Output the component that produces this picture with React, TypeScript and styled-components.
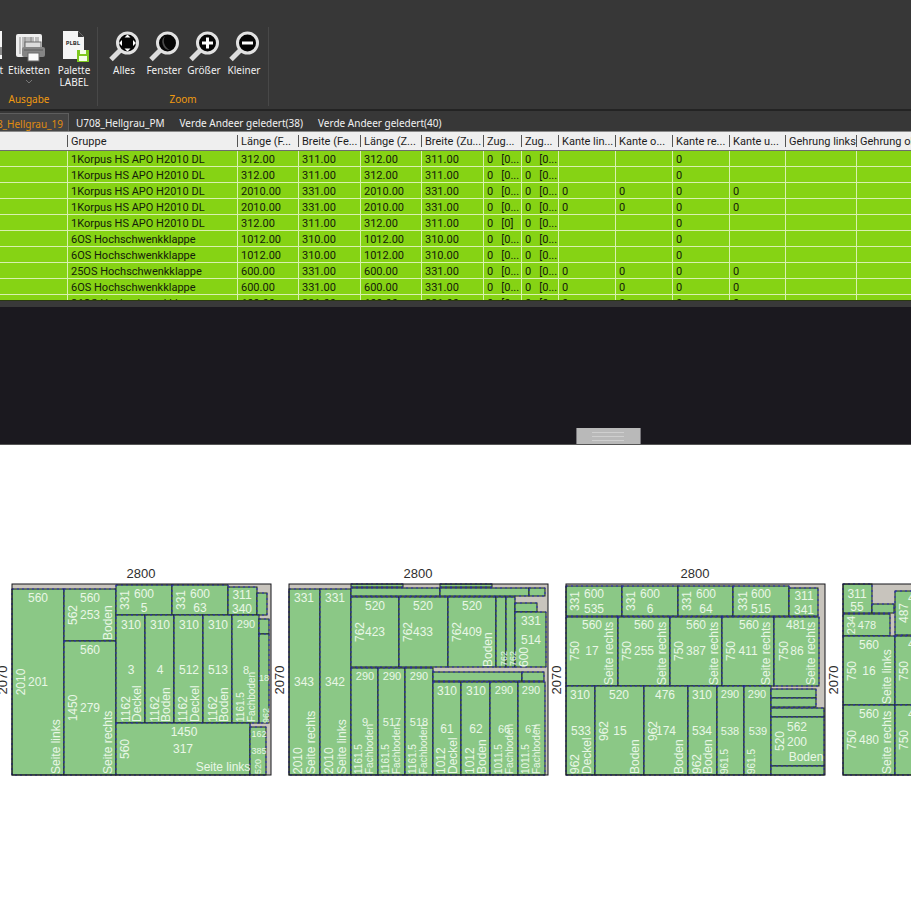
import React from 'react';
import styled, { createGlobalStyle } from 'styled-components';

const GlobalStyle = createGlobalStyle`
  * { box-sizing: border-box; }
  body { margin: 0; background: #ffffff; overflow-x: hidden; }
  button { font: inherit; color: inherit; border: 0; background: none; padding: 0; cursor: pointer; }
`;

const Page = styled.div`
  display: flex;
  flex-direction: column;
  min-height: 100vh;
  overflow: hidden;
  font-family: 'Noto Sans', 'Open Sans', sans-serif;
  font-size: 10px;
  color: #f0f0f0;
`;

/* ---------- ribbon ---------- */

const Ribbon = styled.header`
  display: flex;
  padding: 27px 0 3px;
  background: #373737;
  border-bottom: 2px solid #232323;
`;

const RibbonGroup = styled.section<{ $cut?: boolean }>`
  display: flex;
  flex-direction: column;
  flex: none;
  width: ${(p) => (p.$cut ? 137 : 171)}px;
  margin-left: ${(p) => (p.$cut ? -39 : 0)}px;
  border-right: 1px solid #484848;
`;

const Tools = styled.div<{ $end?: boolean }>`
  display: flex;
  justify-content: ${(p) => (p.$end ? 'flex-end' : 'center')};
  height: 65px;
  padding: ${(p) => (p.$end ? '0 2px 0 0' : '0 0 0 2px')};
`;

const ToolButton = styled.button<{ $width: number; $cut?: boolean }>`
  display: flex;
  flex-direction: column;
  align-items: ${(p) => (p.$cut ? 'flex-end' : 'center')};
  width: ${(p) => p.$width}px;
  padding-right: ${(p) => (p.$cut ? 2 : 0)}px;
  line-height: 12px;
  white-space: nowrap;
  svg { flex: none; margin: 3px 0 2px; }
`;

const ToolText = styled.span`
  display: block;
  text-align: center;
  white-space: pre-line;
`;

const Caption = styled.div`
  text-align: center;
  line-height: 14px;
  color: #f09a10;
`;

function Lens({ children }: { children: React.ReactNode }) {
  return (
    <svg width="32" height="32" viewBox="0 0 32 32" aria-hidden="true">
      <path d="M3 29.5 L12 20.5" stroke="#dedede" strokeWidth="5" />
      <circle cx="19.5" cy="13" r="10" fill="#050505" stroke="#e2e2e2" strokeWidth="3" />
      {children}
    </svg>
  );
}

const LabelPrinterIcon = () => (
  <svg width="32" height="32" viewBox="0 0 32 32" aria-hidden="true">
    <rect x="3" y="4" width="26" height="23" rx="2" fill="#eeeeee" />
    <path d="M7 7v17M10 7v17M14 7v17M16 7v17M20 7v17M23 7v17M25 7v17" stroke="#8a8a8a" strokeWidth="1" />
    <path d="M12 7v17M18 7v17" stroke="#555" strokeWidth="1" />
    <rect x="12" y="12" width="16" height="6" fill="#dcdcdc" stroke="#6a6a6a" />
    <rect x="9" y="17" width="23" height="10" rx="2" fill="#858585" />
    <path d="M11 20h19" stroke="#5c5c5c" />
    <rect x="15" y="23" width="11" height="8" fill="#fafafa" stroke="#6a6a6a" />
  </svg>
);

const PaletteIcon = () => (
  <svg width="32" height="32" viewBox="0 0 32 32" aria-hidden="true">
    <path d="M5 1H20L26 7V29H5Z" fill="#f5f5f5" />
    <path d="M20 1V7H26Z" fill="#3a3a3a" />
    <text x="15" y="15" textAnchor="middle" fontSize="6" fontWeight="700" fill="#333">PLBL</text>
    <rect x="19" y="20" width="12" height="12" fill="#7ec81e" />
    <rect x="22" y="20" width="6" height="4" fill="#f4ffe8" />
    <rect x="21" y="26" width="8" height="5" fill="#f4ffe8" />
  </svg>
);

const SheetEdgeIcon = () => (
  <svg width="32" height="32" viewBox="0 0 32 32" aria-hidden="true">
    <path d="M5 1H31V17H5Z" fill="#f5f5f5" />
    <path d="M5 17H31V25H5Z" fill="#8a8a8a" />
    <path d="M5 25H31V29H5Z" fill="#f5f5f5" />
  </svg>
);

const Chevron = () => (
  <svg width="8" height="6" viewBox="0 0 8 6" aria-hidden="true">
    <path d="M1 1L4 4L7 1" fill="none" stroke="#777" strokeWidth="1" />
  </svg>
);

/* ---------- tabs ---------- */

const TabBar = styled.nav`
  display: flex;
  height: 20px;
  padding-top: 2px;
  background: #373737;
`;

const Tab = styled.button<{ $active?: boolean }>`
  display: flex;
  justify-content: flex-end;
  flex: none;
  width: ${(p) => (p.$active ? '109px' : 'auto')};
  margin-left: ${(p) => (p.$active ? -40 : 0)}px;
  padding: ${(p) => (p.$active ? '0 5px 0 0' : '0 8px 0 7px')};
  line-height: 20px;
  color: ${(p) => (p.$active ? '#e08c10' : '#f2f2f2')};
  background: ${(p) => (p.$active ? '#444444' : 'transparent')};
  border: solid #5e5e5e;
  border-width: ${(p) => (p.$active ? '1px 1px 0 0' : 0)};
  white-space: nowrap;
`;

/* ---------- part list ---------- */

const TableArea = styled.div`
  height: 170px;
  overflow: hidden;
  background: #86d314;
  border-bottom: 1px solid #2a3a10;
`;

const PartTable = styled.table`
  width: 100%;
  min-width: 960px;
  table-layout: fixed;
  border-collapse: separate;
  border-spacing: 0;
  font-family: Roboto, 'Liberation Sans', sans-serif;
  font-size: 11px;
  color: #14200a;
`;

const HeadCell = styled.th`
  position: relative;
  height: 20px;
  padding: 1px 0 0 3px;
  overflow: hidden;
  text-align: left;
  font-weight: 400;
  white-space: nowrap;
  color: #1c1c1c;
  background: #efefef;
  border-top: 1px solid #8a8a8a;
  border-bottom: 1px solid #6d6d6d;
  &::after {
    content: '';
    position: absolute;
    right: 0;
    top: 3px;
    bottom: 3px;
    width: 1px;
    background: #555;
  }
`;

const Cell = styled.td`
  height: 16px;
  padding: 2px 0 0 3px;
  overflow: hidden;
  line-height: 13px;
  white-space: pre;
  border-right: 1px solid #d9f0b0;
  border-bottom: 1px solid #d9f0b0;
`;

const columns: [string, number | undefined][] = [
  ['', 68], ['Gruppe', 170], ['Länge (F...', 61], ['Breite (Fe...', 62], ['Länge (Z...', 61],
  ['Breite (Zu...', 62], ['Zug...', 38], ['Zug...', 37], ['Kante lin...', 57], ['Kante o...', 57],
  ['Kante re...', 57], ['Kante u...', 56], ['Gehrung links', 71], ['Gehrung oben', undefined],
];

const part = (name: string, l: string, w: string, edges: boolean, pull = '0   [0...') => {
  const e = edges ? '0' : '';
  return ['', name, l, w, l, w, pull, '0   [0...', e, e, '0', e, '', ''];
};

const H2010 = '1Korpus HS APO H2010 DL';
const rows = [
  part(H2010, '312.00', '311.00', false),
  part(H2010, '312.00', '311.00', false),
  part(H2010, '2010.00', '331.00', true),
  part(H2010, '2010.00', '331.00', true),
  part(H2010, '312.00', '311.00', false, '0   [0]'),
  part('6OS Hochschwenkklappe', '1012.00', '310.00', false),
  part('6OS Hochschwenkklappe', '1012.00', '310.00', false),
  part('25OS Hochschwenkklappe', '600.00', '331.00', true),
  part('6OS Hochschwenkklappe', '600.00', '331.00', true),
  part('26OS Hochschwenkklappe', '600.00', '331.00', true),
];

/* ---------- preview ---------- */

const Stage = styled.div`
  display: flex;
  align-items: flex-end;
  height: 144px;
  background: #1b191f;
  border-top: 6px solid #393939;
  border-bottom: 1px solid #555;
`;

const Grip = styled.button`
  display: flex;
  flex-direction: column;
  align-items: center;
  justify-content: center;
  gap: 3px;
  width: 65px;
  height: 16px;
  margin-left: calc(66.7% - 32px);
  background: #b9b9b9;
  border: solid #77757a;
  border-width: 0 1px;
  span { width: 32px; height: 1px; background: #cfcfcf; }
`;

const Plans = styled.main`
  display: flex;
  flex: 1;
  padding-top: 117px;
  margin-left: -6px;
  background: #ffffff;
`;

const Plan = styled.svg`
  flex: none;
  font-family: 'Liberation Sans', Arial, sans-serif;
`;

type Rect = [number, number, number, number];
/** kind: h = centred, v = centred and turned, b = turned, starting at the given bottom edge */
type Note = [kind: 'h' | 'v' | 'b', text: string, x: number, y: number, size?: number];
interface Sheet { pieces: Rect[]; notes: Note[] }

const sheets: Sheet[] = [
  {
    pieces: [
      [0, 5, 52, 186], [52, 5, 52, 52], [52, 57, 52, 134], [104, 1, 56, 30], [160, 1, 56, 30],
      [216, 3, 29, 28], [245, 9, 10, 22], [104, 31, 29, 108], [133, 31, 29, 108], [162, 31, 29, 108],
      [191, 31, 29, 108], [220, 31, 27, 108], [247, 35, 10, 15], [247, 50, 10, 89],
      [104, 139, 134, 52], [238, 143, 16, 48],
    ],
    notes: [
      ['h', '560', 26, 14], ['h', '201', 26, 98], ['v', '2010', 9, 98], ['b', 'Seite links', 44, 190],
      ['h', '560', 78, 14], ['h', '253', 78, 31], ['v', '562', 61, 31], ['b', 'Boden', 96, 56],
      ['h', '560', 78, 66], ['h', '279', 78, 124], ['v', '1450', 61, 124], ['b', 'Seite rechts', 96, 190],
      ['h', '600', 132, 10], ['h', '5', 132, 24], ['v', '331', 113, 16],
      ['h', '600', 188, 10], ['h', '63', 188, 24], ['v', '331', 169, 16],
      ['h', '311', 230, 11], ['h', '340', 230, 25],
      ['h', '310', 119, 41], ['h', '3', 119, 86], ['b', '1162', 114, 138], ['b', 'Deckel', 125, 138],
      ['h', '310', 148, 41], ['h', '4', 148, 86], ['b', '1162', 143, 138], ['b', 'Boden', 154, 138],
      ['h', '310', 177, 41], ['h', '512', 177, 86], ['b', '1162', 171, 138], ['b', 'Deckel', 183, 138],
      ['h', '310', 206, 41], ['h', '513', 206, 86], ['b', '1162', 201, 138], ['b', 'Boden', 212, 138],
      ['h', '290', 234, 40, 11], ['h', '8', 234, 86, 11], ['b', '1161.5', 229, 138, 10], ['b', 'Fachboden', 240, 138, 10],
      ['h', '18', 252, 94, 9], ['b', '962', 254, 139, 9],
      ['h', '1450', 172, 148], ['h', '317', 171, 165], ['v', '560', 113, 165], ['h', 'Seite links', 211, 183],
      ['h', '162', 247, 150, 9], ['h', '385', 247, 167, 9], ['b', '520', 246, 190, 9],
    ],
  },
  {
    pieces: [
      [0, 5, 31, 186], [31, 5, 31, 186], [62, 0, 52, 3], [151, 0, 52, 3], [62, 4, 89, 8],
      [151, 4, 89, 8], [240, 4, 16, 8], [62, 13, 48, 70], [110, 13, 49, 70], [159, 13, 48, 70],
      [207, 13, 10, 70], [217, 13, 9, 70], [226, 19, 22, 9], [226, 28, 31, 55],
      [62, 84, 27, 107], [89, 84, 27, 107], [116, 84, 28, 107], [144, 88, 89, 9], [233, 88, 22, 9],
      [144, 98, 28, 93], [172, 98, 29, 93], [201, 98, 28, 93], [229, 98, 27, 93],
    ],
    notes: [
      ['h', '331', 15, 14], ['h', '331', 46, 14], ['h', '343', 15, 98], ['h', '342', 46, 98],
      ['b', '2010', 9, 190], ['b', 'Seite rechts', 22, 190], ['b', '2010', 40, 190], ['b', 'Seite links', 53, 190],
      ['h', '520', 86, 22], ['h', '423', 86, 48], ['v', '762', 71, 48],
      ['h', '520', 134, 22], ['h', '433', 134, 48], ['v', '762', 119, 48],
      ['h', '520', 183, 22], ['h', '409', 183, 48], ['v', '762', 168, 48], ['b', 'Boden', 199, 83],
      ['b', '762', 215, 82, 9], ['b', '762', 224, 82, 9],
      ['h', '331', 242, 37], ['h', '514', 242, 56], ['b', '600', 235, 83],
      ['h', '290', 76, 92, 11], ['h', '9', 76, 138, 11], ['b', '1161.5', 70, 190, 10], ['b', 'Fachboden', 81, 190, 10],
      ['h', '290', 103, 92, 11], ['h', '517', 103, 138, 11], ['b', '1161.5', 97, 190, 10], ['b', 'Fachboden', 108, 190, 10],
      ['h', '290', 130, 92, 11], ['h', '518', 130, 138, 11], ['b', '1161.5', 124, 190, 10], ['b', 'Fachboden', 135, 190, 10],
      ['h', '310', 158, 107], ['h', '61', 158, 145], ['b', '1012', 152, 190], ['b', 'Deckel', 164, 190],
      ['h', '310', 187, 107], ['h', '62', 187, 145], ['b', '1012', 181, 190], ['b', 'Boden', 193, 190],
      ['h', '290', 215, 106, 11], ['h', '66', 215, 145, 11], ['b', '1011.5', 210, 190, 10], ['b', 'Fachboden', 221, 190, 10],
      ['h', '290', 242, 106, 11], ['h', '67', 242, 145, 11], ['b', '1011.5', 237, 190, 10], ['b', 'Fachboden', 248, 190, 10],
    ],
  },
  {
    pieces: [
      [0, 2, 56, 30], [56, 2, 56, 30], [112, 2, 55, 30], [167, 2, 56, 30], [223, 4, 29, 28],
      [0, 33, 52, 69], [52, 33, 52, 69], [104, 33, 52, 69], [156, 33, 52, 69], [208, 33, 45, 69],
      [0, 102, 29, 89], [29, 102, 49, 89], [78, 102, 44, 89], [122, 102, 29, 89], [151, 102, 27, 89], [178, 102, 27, 89],
      [205, 105, 45, 9], [205, 114, 45, 9], [205, 124, 53, 9], [205, 133, 53, 49], [205, 182, 53, 9],
    ],
    notes: [
      ['h', '600', 28, 10], ['h', '535', 28, 25], ['v', '331', 9, 17],
      ['h', '600', 84, 10], ['h', '6', 84, 25], ['v', '331', 65, 17],
      ['h', '600', 140, 10], ['h', '64', 140, 25], ['v', '331', 121, 17],
      ['h', '600', 195, 10], ['h', '515', 195, 25], ['v', '331', 177, 17],
      ['h', '311', 238, 12], ['h', '341', 238, 26],
      ['h', '560', 26, 41], ['h', '17', 26, 67], ['v', '750', 9, 67], ['b', 'Seite rechts', 43, 101],
      ['h', '560', 78, 41], ['h', '255', 78, 67], ['v', '750', 61, 67], ['b', 'Seite rechts', 96, 101],
      ['h', '560', 130, 41], ['h', '387', 130, 67], ['v', '750', 113, 67], ['b', 'Seite rechts', 148, 101],
      ['h', '560', 183, 41], ['h', '411', 182, 67], ['v', '750', 165, 67], ['b', 'Seite rechts', 200, 101],
      ['h', '481', 230, 41], ['h', '86', 231, 67], ['v', '750', 218, 67], ['b', 'Seite rechts', 245, 101],
      ['h', '310', 14, 111], ['h', '533', 15, 147], ['b', '962', 9, 190], ['b', 'Deckel', 21, 190],
      ['h', '520', 53, 111], ['h', '15', 54, 147], ['v', '962', 38, 147], ['b', 'Boden', 69, 190],
      ['h', '476', 99, 111], ['h', '174', 100, 147], ['v', '962', 87, 147], ['b', 'Boden', 113, 190],
      ['h', '310', 136, 111], ['h', '534', 136, 147], ['b', '962', 131, 190], ['b', 'Boden', 142, 190],
      ['h', '290', 164, 110, 11], ['h', '538', 164, 147, 11], ['b', '961.5', 159, 190, 10],
      ['h', '290', 191, 110, 11], ['h', '539', 192, 147, 11], ['b', '961.5', 186, 190, 10],
      ['h', '562', 231, 143], ['h', '200', 231, 158], ['v', '520', 214, 157], ['h', 'Boden', 240, 173],
    ],
  },
  {
    pieces: [
      [0, 0, 29, 29], [29, 20, 22, 9], [0, 30, 47, 22], [52, 7, 52, 44],
      [0, 52, 52, 69], [52, 52, 52, 69], [0, 121, 52, 70], [52, 121, 52, 70],
    ],
    notes: [
      ['h', '311', 14, 10], ['h', '55', 14, 23], ['v', '234', 8, 41, 11], ['h', '478', 24, 41, 11],
      ['h', '560', 26, 61], ['h', '16', 26, 87], ['v', '750', 9, 87], ['b', 'Seite links', 44, 120],
      ['h', '560', 26, 130], ['h', '480', 26, 156], ['v', '750', 9, 156], ['b', 'Seite rechts', 44, 190],
      ['v', '487', 61, 29], ['h', '481', 75, 14], ['h', '481', 75, 60], ['v', '750', 61, 87],
      ['h', '481', 75, 130], ['v', '750', 61, 156],
    ],
  },
];

const Board = styled.rect`
  fill: #c8c4bd;
`;
const Frame = styled.rect`
  fill: none;
  stroke: #15151a;
`;
const Piece = styled.rect`
  fill: #8bc886;
  stroke: #182818;
`;
const CutLine = styled.rect`
  fill: none;
  stroke: #2c2cc4;
  stroke-dasharray: 2 3;
`;
const PieceText = styled.text<{ $size: number }>`
  font-size: ${(p) => p.$size}px;
  fill: #e9f7e6;
`;
const SizeText = styled.text`
  font-size: 13px;
  fill: #2e2e2e;
  text-anchor: middle;
`;

function SheetPlan({ sheet }: { sheet: Sheet }) {
  return (
    <Plan width="277" height="220" viewBox="-18 -22 277 220" overflow="visible">
      <SizeText x="129" y="-6">2800</SizeText>
      <SizeText transform="translate(-5 96) rotate(-90)">2070</SizeText>
      <Board x="0" y="0" width="259" height="191" />
      {sheet.pieces.map(([x, y, w, h], i) => (
        <g key={i}>
          <Piece x={x} y={y} width={w} height={h} />
          <CutLine x={x} y={y} width={w} height={h} />
        </g>
      ))}
      <Frame x="0" y="0" width="259" height="191" />
      {sheet.notes.map(([kind, text, x, y, size = 12], i) => {
        const drop = size > 10 ? 4 : 3;
        return (
          <PieceText
            key={i}
            $size={size}
            textAnchor={kind === 'b' ? 'start' : 'middle'}
            transform={kind === 'h' ? `translate(${x} ${y + drop})` : `translate(${x + drop} ${y}) rotate(-90)`}
          >
            {text}
          </PieceText>
        );
      })}
    </Plan>
  );
}

export default function App() {
  return (
    <Page>
      <GlobalStyle />
      <Ribbon>
        <RibbonGroup $cut>
          <Tools $end>
            <ToolButton $width={40} $cut><SheetEdgeIcon /><ToolText>Format</ToolText></ToolButton>
            <ToolButton $width={48}><LabelPrinterIcon /><ToolText>Etiketten</ToolText><Chevron /></ToolButton>
            <ToolButton $width={42}><PaletteIcon /><ToolText>{'Palette\nLABEL'}</ToolText></ToolButton>
          </Tools>
          <Caption>Ausgabe</Caption>
        </RibbonGroup>
        <RibbonGroup>
          <Tools>
            <ToolButton $width={40}>
              <Lens>
                <path d="M19.5 4.5l3 3h-6zM19.5 21.5l3-3h-6zM11 13l3-3v6zM28 13l-3-3v6z" fill="#fff" />
              </Lens>
              <ToolText>Alles</ToolText>
            </ToolButton>
            <ToolButton $width={40}>
              <Lens>
                <path d="M17 6A8 8 0 0 0 22 20A10 10 0 0 1 17 6Z" fill="#4a4a4a" />
              </Lens>
              <ToolText>Fenster</ToolText>
            </ToolButton>
            <ToolButton $width={40}>
              <Lens><path d="M14 13h11M19.5 7.5v11" stroke="#fff" strokeWidth="3" /></Lens>
              <ToolText>Größer</ToolText>
            </ToolButton>
            <ToolButton $width={40}>
              <Lens><path d="M14 13h11" stroke="#fff" strokeWidth="3" /></Lens>
              <ToolText>Kleiner</ToolText>
            </ToolButton>
          </Tools>
          <Caption>Zoom</Caption>
        </RibbonGroup>
      </Ribbon>
      <TabBar>
        <Tab $active>U708_Hellgrau_19</Tab>
        <Tab>U708_Hellgrau_PM</Tab>
        <Tab>Verde Andeer geledert(38)</Tab>
        <Tab>Verde Andeer geledert(40)</Tab>
      </TabBar>
      <TableArea>
        <PartTable>
          <colgroup>
            {columns.map(([, w], i) => <col key={i} width={w} />)}
          </colgroup>
          <thead>
            <tr>{columns.map(([name], i) => <HeadCell key={i} scope="col">{name}</HeadCell>)}</tr>
          </thead>
          <tbody>
            {rows.map((cells, r) => (
              <tr key={r}>{cells.map((text, c) => <Cell key={c}>{text}</Cell>)}</tr>
            ))}
          </tbody>
        </PartTable>
      </TableArea>
      <Stage>
        <Grip aria-label="Bereich verschieben"><span /><span /><span /></Grip>
      </Stage>
      <Plans>
        {sheets.map((sheet, i) => <SheetPlan key={i} sheet={sheet} />)}
      </Plans>
    </Page>
  );
}
